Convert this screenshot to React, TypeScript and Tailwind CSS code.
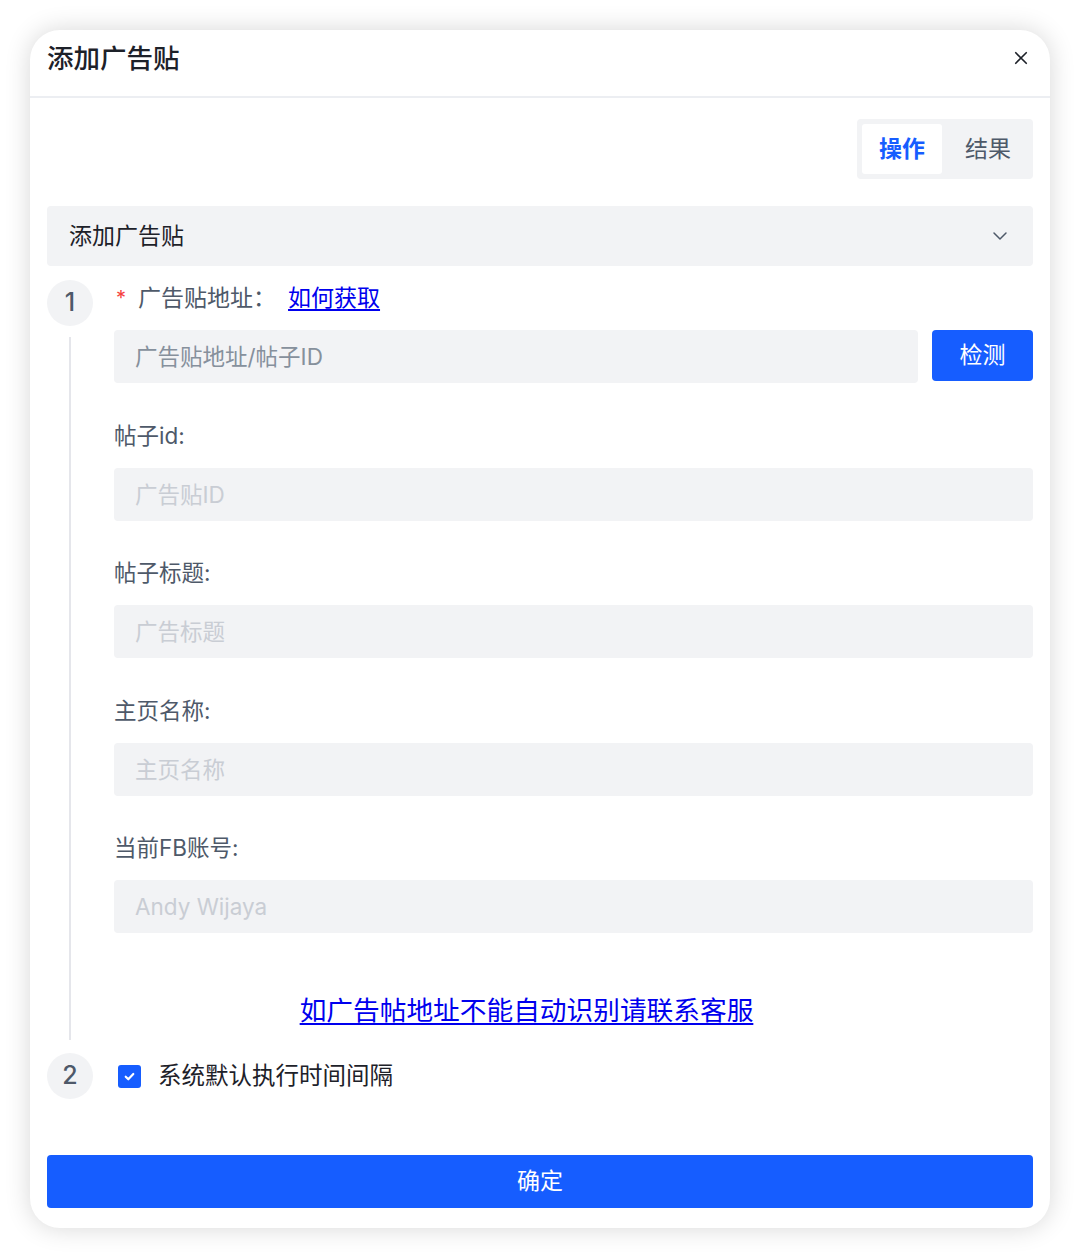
import React from "react";

const fields = [
    {label: "帖子id:", placeholder: "广告贴ID"},
    {label: "帖子标题:", placeholder: "广告标题"},
    {label: "主页名称:", placeholder: "主页名称"},
    {label: "当前FB账号:", placeholder: "Andy Wijaya"},
]

export default function App() {
    return (
        <div className="min-h-screen bg-white p-[30px] font-['Inter','Noto_Sans_CJK_SC',sans-serif]">
            <div className="w-[1020px] rounded-[30px] bg-white shadow-[0_0_26px_rgba(0,0,0,0.16)]">
                {/* header */}
                <div className="flex h-[68px] items-start justify-between border-b-2 border-[#eceef2] px-[17px] pt-[10px]">
                    <h2 className="text-[26.5px] font-medium leading-[36px] text-[#1d2129]">添加广告贴</h2>
                    <button className="mt-[9px] mr-[3px] text-[#1d2129]">
                        <CloseIcon className="h-[18px] w-[18px]"/>
                    </button>
                </div>

                <div className="px-[17px] pb-[20px]">
                    {/* tabs */}
                    <div className="mt-[21px] flex justify-end">
                        <div className="flex h-[60px] rounded-[4px] bg-[#f2f3f5] p-[5px]">
                            <div className="flex w-[80px] items-center justify-center rounded-[3px] bg-white text-[23px] font-semibold text-[#165dff]">操作</div>
                            <div className="flex w-[86px] items-center justify-center pl-[6px] text-[23px] text-[#4e5969]">结果</div>
                        </div>
                    </div>

                    {/* collapse */}
                    <div className="mt-[27px] flex h-[60px] items-center justify-between rounded-[4px] bg-[#f2f3f5] pl-[22px] pr-[24px]">
                        <span className="text-[23px] text-[#1d2129]">添加广告贴</span>
                        <ChevronIcon className="h-[18px] w-[18px] text-[#4e5969]"/>
                    </div>

                    {/* step 1 */}
                    <div className="mt-[14px] grid grid-cols-[46px_1fr] gap-x-[21px]">
                        <div className="flex flex-col items-center">
                            <StepCircle n={1}/>
                            <div className="mt-[11px] w-[2px] flex-1 bg-[#e5e6eb]"/>
                        </div>
                        <div className="pb-[12px]">
                            <div className="flex h-[36px] items-center text-[23px] text-[#4e5969]">
                                <span className="ml-[2px] mr-[12px] text-[20px] text-[#f53f3f]">*</span>
                                <span>广告贴地址：</span>
                                <a href="#" className="ml-[12px] text-[#0000ee] underline underline-offset-[3px]">如何获取</a>
                            </div>
                            <div className="mt-[14px] flex gap-[14px]">
                                <input
                                    type="text"
                                    placeholder="广告贴地址/帖子ID"
                                    className="h-[53px] flex-1 rounded-[4px] bg-[#f2f3f5] px-[21px] text-[22.5px] text-[#1d2129] outline-none placeholder:text-[#86909c]"
                                />
                                <button className="h-[51px] w-[101px] rounded-[4px] bg-[#165dff] text-[23px] text-white">检测</button>
                            </div>

                            {fields.map((f) => (
                                <div key={f.label}>
                                    <div className="mt-[36.5px] flex h-[32px] items-center text-[22.5px] text-[#4e5969]">{f.label}</div>
                                    <input
                                        type="text"
                                        disabled
                                        placeholder={f.placeholder}
                                        className="mt-4 h-[53px] w-full rounded-[4px] bg-[#f2f3f5] px-[21px] text-[22.5px] outline-none placeholder:text-[#c9cdd4]"
                                    />
                                </div>
                            ))}

                            <div className="mt-[59px] flex h-[36px] items-center justify-center pr-[94px]">
                                <a href="#" className="text-[26.7px] leading-[36px] text-[#0000ee] underline underline-offset-[3px]">如广告帖地址不能自动识别请联系客服</a>
                            </div>
                        </div>
                    </div>

                    {/* step 2 */}
                    <div className="mt-[13px] grid grid-cols-[46px_1fr] gap-x-[21px]">
                        <StepCircle n={2}/>
                        <label className="flex items-center">
                            <span className="ml-[4px] flex h-[23px] w-[23px] items-center justify-center rounded-[3px] bg-[#165dff]">
                                <svg viewBox="0 0 12 12" className="h-[13px] w-[13px]" fill="none" stroke="white" strokeWidth="2" strokeLinecap="round" strokeLinejoin="round">
                                    <path d="M2.5 6.2l2.4 2.4 4.6-4.9"/>
                                </svg>
                            </span>
                            <span className="ml-[17px] text-[23.5px] text-[#1d2129]">系统默认执行时间间隔</span>
                        </label>
                    </div>

                    <button className="mt-[56px] h-[53px] w-full rounded-[4px] bg-[#165dff] text-[23px] text-white">确定</button>
                </div>
            </div>
        </div>
    )
}

function StepCircle({n}: { n: number }) {
    return (
        <div className="flex h-[46px] w-[46px] items-center justify-center rounded-full bg-[#f2f3f5] text-[25px] font-medium text-[#4e5969]">
            {n}
        </div>
    )
}

function CloseIcon(props: any) {
    return (
        <svg {...props} viewBox="0 0 24 24" fill="none" stroke="currentColor" strokeWidth="2.2" strokeLinecap="round">
            <path d="M5 5l14 14M19 5L5 19"/>
        </svg>
    )
}

function ChevronIcon(props: any) {
    return (
        <svg {...props} viewBox="0 0 24 24" fill="none" stroke="currentColor" strokeWidth="2" strokeLinecap="round" strokeLinejoin="round">
            <path d="M4 8l8 8 8-8"/>
        </svg>
    )
}
